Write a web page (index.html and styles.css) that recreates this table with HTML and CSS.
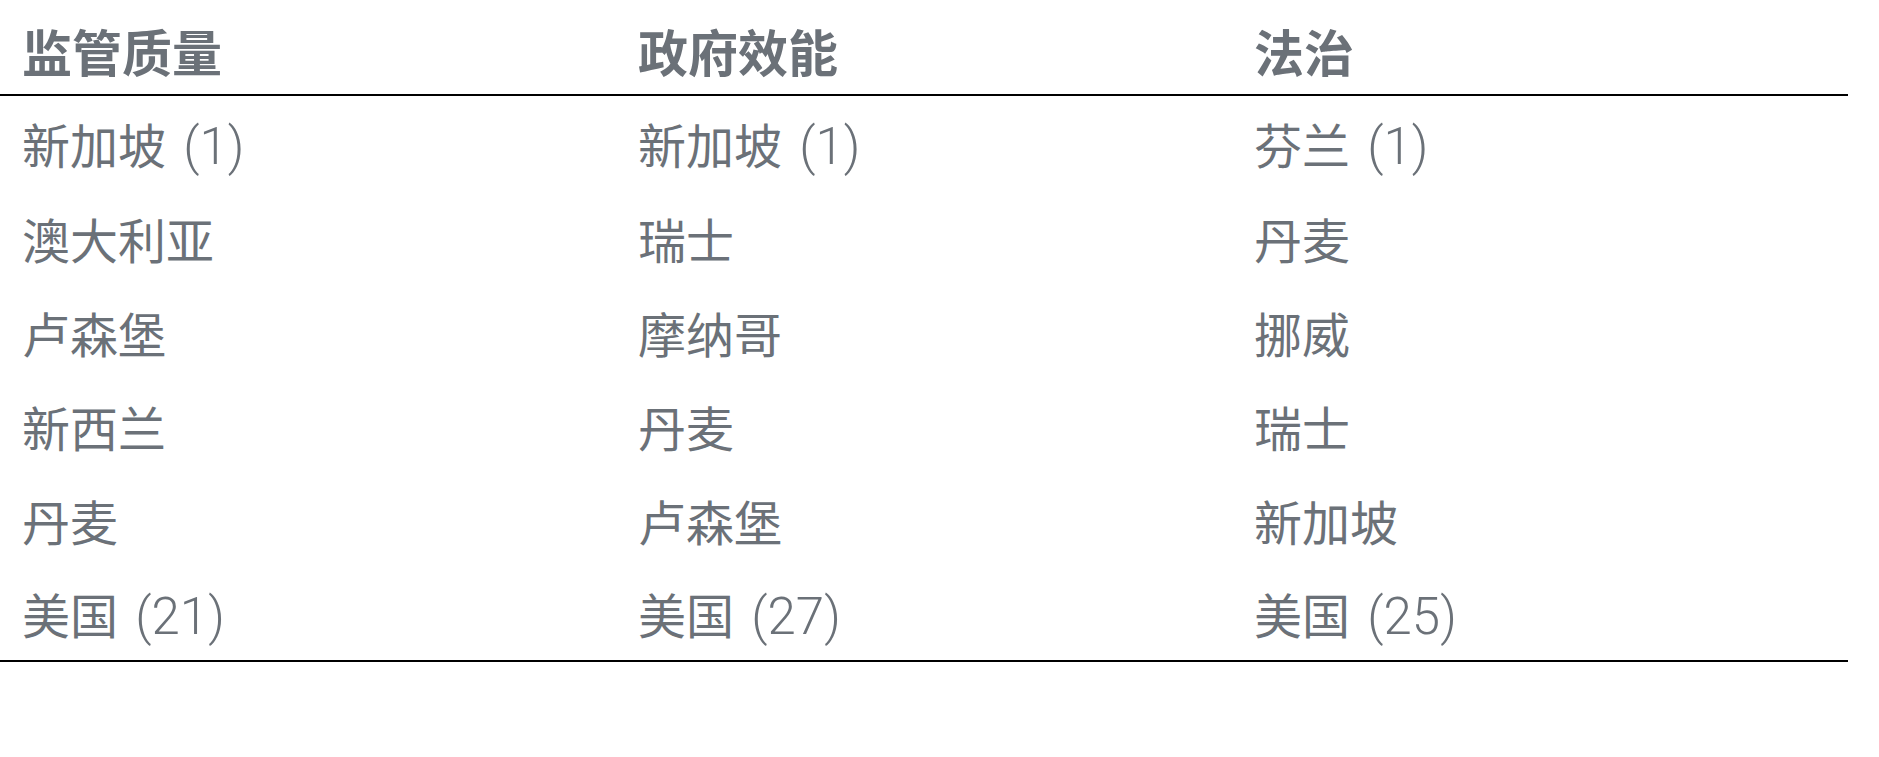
FILE: index.html
```html
<!DOCTYPE html>
<html lang="zh-CN">
<head>
<meta charset="utf-8">
<title>治理指标排名</title>
<link rel="stylesheet" href="styles.css">
</head>
<body>
<div class="table">
  <div class="row head">
    <div class="cell">监管质量</div>
    <div class="cell">政府效能</div>
    <div class="cell">法治</div>
  </div>
  <div class="tbody">
    <div class="row">
      <div class="cell">新加坡 <span class="num">(1)</span></div>
      <div class="cell">新加坡 <span class="num">(1)</span></div>
      <div class="cell">芬兰 <span class="num">(1)</span></div>
    </div>
    <div class="row">
      <div class="cell">澳大利亚</div>
      <div class="cell">瑞士</div>
      <div class="cell">丹麦</div>
    </div>
    <div class="row">
      <div class="cell">卢森堡</div>
      <div class="cell">摩纳哥</div>
      <div class="cell">挪威</div>
    </div>
    <div class="row">
      <div class="cell">新西兰</div>
      <div class="cell">丹麦</div>
      <div class="cell">瑞士</div>
    </div>
    <div class="row">
      <div class="cell">丹麦</div>
      <div class="cell">卢森堡</div>
      <div class="cell">新加坡</div>
    </div>
    <div class="row">
      <div class="cell">美国 <span class="num">(21)</span></div>
      <div class="cell">美国 <span class="num">(27)</span></div>
      <div class="cell">美国 <span class="num">(25)</span></div>
    </div>
  </div>
</div>
</body>
</html>
```

FILE: styles.css
```css
html, body {
  margin: 0;
  padding: 0;
  background: #ffffff;
}

body {
  font-family: "Lato", "Noto Sans CJK SC", sans-serif;
  color: #6b7178;
}

.table {
  width: 1848px;
}

.row {
  display: grid;
  grid-template-columns: repeat(3, 616px);
  align-items: center;
  box-sizing: border-box;
  height: 94px;
  padding-top: 7px;
}

.cell {
  padding-left: 22px;
  font-size: 48px;
  line-height: 60px;
  font-weight: 400;
  white-space: nowrap;
}

.num {
  font-family: "Roboto", sans-serif;
  font-weight: 300;
  font-size: 51px;
  margin-left: 5px;
}

.head {
  padding-top: 5px;
  border-bottom: 2px solid #000000;
  height: 96px;
}

.head .cell {
  font-family: "Noto Sans CJK SC", sans-serif;
  font-weight: 700;
  font-size: 50px;
}

.tbody {
  border-bottom: 2px solid #000000;
}
```
